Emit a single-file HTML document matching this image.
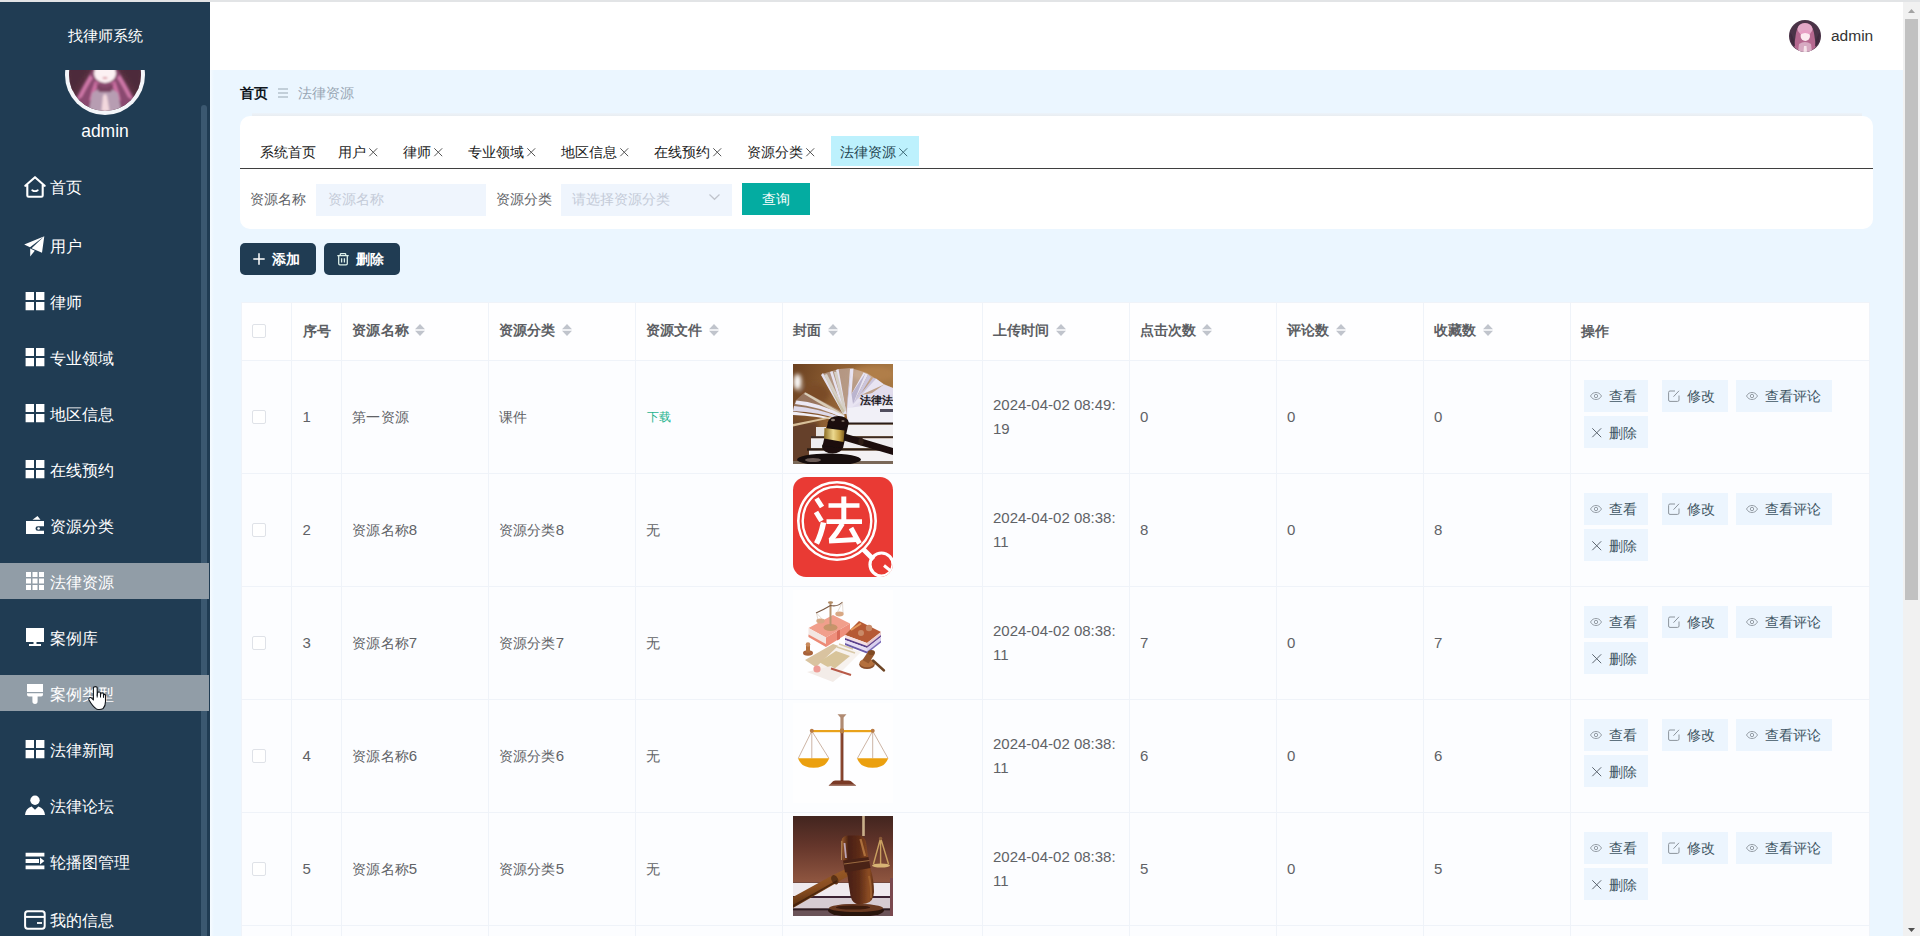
<!DOCTYPE html>
<html lang="zh">
<head>
<meta charset="utf-8">
<title>法律资源</title>
<style>
*{box-sizing:border-box;margin:0;padding:0}
html,body{width:1920px;height:936px;overflow:hidden}
body{position:relative;background:#ebf6ff;font-family:"Liberation Sans",sans-serif;font-size:14px;color:#606266}
.a{position:absolute}
.t{position:absolute;white-space:nowrap}
.j{text-align:justify;text-align-last:justify}
svg{position:absolute;overflow:visible}
/* sidebar */
#side{left:0;top:0;width:210px;height:936px;background:#203c53;overflow:hidden}
.mi{position:absolute;left:0;width:209px;height:36px}
.mi.on{background:#919da7}
.mi svg{left:24px;top:7px;width:22px;height:22px}
/* header */
#hdr{left:210px;top:0;width:1693px;height:70px;background:#fff}
/* tabs */
/* table */
.vl{position:absolute;top:302px;width:1px;height:634px;background:#eff3f9}
.hl{position:absolute;left:241px;width:1629px;height:1px;background:#eff3f9}
.cb{position:absolute;left:252px;width:14px;height:14px;border:1px solid #dfe2e8;border-radius:2px;background:#fff}
.ob{position:absolute;height:32px;background:#ecf5fe}
</style>
</head>
<body>
<!-- SIDEBAR -->
<div id="side" class="a">
<div class="t j" style="left:67.5px;top:24px;width:75.2px;height:24px;line-height:24px;font-size:15px;color:#fff;">找律师系统</div>
<div class="a" style="left:55px;top:70px;width:100px;height:50px;overflow:hidden"><svg style="left:10px;top:-35px;width:80px;height:80px" viewBox="0 0 80 80"><defs><clipPath id="avc"><circle cx="40" cy="40" r="36"/></clipPath><filter id="avb" x="-20%" y="-20%" width="140%" height="140%"><feGaussianBlur stdDeviation="1.100"/></filter></defs><circle cx="40" cy="40" r="40" fill="#f4f6fa"/><g clip-path="url(#avc)"><rect width="80" height="80" fill="#55303f"/><g filter="url(#avb)"><path d="M29 32Q17 50 9 66L20 78H60L71 66Q63 50 51 32Z" fill="#8a4a70"/><path d="M25 40Q16 56 12 65L17 62Q23 50 28 43Z M55 40Q64 56 68 65L63 62Q57 50 52 43Z" fill="#cf78a8"/><path d="M30 46Q26 56 24 66L28 64Q30 55 34 48Z M50 46Q54 56 56 66L52 64Q50 55 46 48Z" fill="#cc6fa2"/><path d="M4 34H23Q14 48 6 58Z M76 34H57Q66 48 74 58Z" fill="#4d2a3a"/><path d="M27 58Q40 48 53 58L57 80H23Z" fill="#b79db2"/><path d="M31 48Q40 56 49 48L46 57H34Z" fill="#7a4262"/><ellipse cx="40" cy="38" rx="11" ry="10" fill="#fcf1f3"/><ellipse cx="40" cy="43" rx="2.600" ry="1.100" fill="#d9929f"/><path d="M36.500 76L38 61Q40 57 42 61L44.500 76Z" fill="#f3d8dd"/></g></g></svg></div>
<div class="t" style="left:0;top:119px;width:210px;height:24px;line-height:24px;text-align:center;color:#fff;font-size:17.500px">admin</div>
<div class="a" style="left:201px;top:105px;width:6px;height:840px;background:#3b5870;border-radius:3px"></div>
<div class="mi" style="top:169px"><svg viewBox="0 0 22 22"><path d="M1.300 9.800L11 1.200L20.700 9.800M3.300 8.800V19.400Q3.300 20.700 4.600 20.700H17.400Q18.700 20.700 18.700 19.400V8.800" fill="none" stroke="#fff" stroke-width="2.100" stroke-linejoin="round" stroke-linecap="round"/><path d="M8.200 14.200Q11 16.200 13.800 14.200" fill="none" stroke="#fff" stroke-width="1.700" stroke-linecap="round"/></svg></div>
<div class="t j" style="left:50px;top:173px;width:32.2px;height:30px;line-height:30px;font-size:16px;color:#fff;">首页</div>
<div class="mi" style="top:227.5px"><svg viewBox="0 0 22 22"><path d="M20.300 1.200L0.200 9.600L6 12.300Z M20.300 1.200L18 17.800L7.600 13.200Z M6.200 13.600V21.400L10.800 15.800Z" fill="#fff"/></svg></div>
<div class="t j" style="left:50px;top:231.5px;width:32.2px;height:30px;line-height:30px;font-size:16px;color:#fff;">用户</div>
<div class="mi" style="top:283px"><svg viewBox="0 0 22 22"><path d="M1.600 2h8.400v8H1.600z M12 2h8.400v8H12z M1.600 12h8.400v8.300H1.600z M12 12h8.400v8.300H12z" fill="#fff"/></svg></div>
<div class="t j" style="left:50px;top:287.5px;width:32.2px;height:30px;line-height:30px;font-size:16px;color:#fff;">律师</div>
<div class="mi" style="top:339px"><svg viewBox="0 0 22 22"><path d="M1.600 2h8.400v8H1.600z M12 2h8.400v8H12z M1.600 12h8.400v8.300H1.600z M12 12h8.400v8.300H12z" fill="#fff"/></svg></div>
<div class="t j" style="left:50px;top:343.5px;width:64.2px;height:30px;line-height:30px;font-size:16px;color:#fff;">专业领域</div>
<div class="mi" style="top:395px"><svg viewBox="0 0 22 22"><path d="M1.600 2h8.400v8H1.600z M12 2h8.400v8H12z M1.600 12h8.400v8.300H1.600z M12 12h8.400v8.300H12z" fill="#fff"/></svg></div>
<div class="t j" style="left:50px;top:399.5px;width:64.2px;height:30px;line-height:30px;font-size:16px;color:#fff;">地区信息</div>
<div class="mi" style="top:451px"><svg viewBox="0 0 22 22"><path d="M1.600 2h8.400v8H1.600z M12 2h8.400v8H12z M1.600 12h8.400v8.300H1.600z M12 12h8.400v8.300H12z" fill="#fff"/></svg></div>
<div class="t j" style="left:50px;top:455.5px;width:64.2px;height:30px;line-height:30px;font-size:16px;color:#fff;">在线预约</div>
<div class="mi" style="top:507px"><svg viewBox="0 0 22 22"><path d="M2 7h18v5.200h-6.200a2.300 2.300 0 0 0 0 4.600H20V20H2z M8.500 5.800L13.500 2L16.500 5.800z" fill="#fff"/><circle cx="14.600" cy="14.500" r="1.300" fill="#fff"/></svg></div>
<div class="t j" style="left:50px;top:511.5px;width:64.2px;height:30px;line-height:30px;font-size:16px;color:#fff;">资源分类</div>
<div class="mi on" style="top:563px"><svg viewBox="0 0 22 22"><path d="M2 2h5v5H2z M8.500 2h5v5h-5z M15 2h5v5h-5z M2 8.500h5v5H2z M8.500 8.500h5v5h-5z M15 8.500h5v5h-5z M2 15h5v5H2z M8.500 15h5v5h-5z M15 15h5v5h-5z" fill="#fff"/></svg></div>
<div class="t j" style="left:50px;top:567.5px;width:64.2px;height:30px;line-height:30px;font-size:16px;color:#fff;">法律资源</div>
<div class="mi" style="top:619px"><svg viewBox="0 0 22 22"><path d="M2 2h18v14H2z M9.500 16h3v2h-3z M5 18h12v2H5z" fill="#fff"/></svg></div>
<div class="t j" style="left:50px;top:623.5px;width:48.2px;height:30px;line-height:30px;font-size:16px;color:#fff;">案例库</div>
<div class="mi on" style="top:675px"><svg viewBox="0 0 22 22"><path d="M3 2h16v8H3z M3 11.300h16v1.200q0 2-2 2h-3.400v4.800a2.600 2.600 0 0 1-5.200 0v-4.800H5q-2 0-2-2z" fill="#fff"/></svg></div>
<div class="t j" style="left:50px;top:679.5px;width:64.2px;height:30px;line-height:30px;font-size:16px;color:#fff;">案例类型</div>
<div class="mi" style="top:731px"><svg viewBox="0 0 22 22"><path d="M1.600 2h8.400v8H1.600z M12 2h8.400v8H12z M1.600 12h8.400v8.300H1.600z M12 12h8.400v8.300H12z" fill="#fff"/></svg></div>
<div class="t j" style="left:50px;top:735.5px;width:64.2px;height:30px;line-height:30px;font-size:16px;color:#fff;">法律新闻</div>
<div class="mi" style="top:787px"><svg viewBox="0 0 22 22"><circle cx="11" cy="6.200" r="4.700" fill="#fff"/><path d="M1 21q0.600-6.400 6.600-8.400L11 15.800L14.400 12.600q6 2 6.600 8.400z" fill="#fff"/></svg></div>
<div class="t j" style="left:50px;top:791.5px;width:64.2px;height:30px;line-height:30px;font-size:16px;color:#fff;">法律论坛</div>
<div class="mi" style="top:843px"><svg viewBox="0 0 22 22"><path d="M1.600 2.800h18.800v3.800H1.600z M1.600 9.100h13.400v3.800H1.600z M1.600 15.400h18.800v3.800H1.600z M16 7.500L20.400 11L16 14.500z" fill="#fff"/></svg></div>
<div class="t j" style="left:50px;top:847.5px;width:80.2px;height:30px;line-height:30px;font-size:16px;color:#fff;">轮播图管理</div>
<div class="mi" style="top:901.5px"><svg viewBox="0 0 22 22"><rect x="1.100" y="2.300" width="19.600" height="17.400" rx="2.600" fill="none" stroke="#fff" stroke-width="2"/><path d="M1 7.900h20" stroke="#fff" stroke-width="2"/><path d="M13 14h5" stroke="#fff" stroke-width="1.800"/></svg></div>
<div class="t j" style="left:50px;top:905.5px;width:64.2px;height:30px;line-height:30px;font-size:16px;color:#fff;">我的信息</div>
<svg style="left:88px;top:686px;width:18px;height:24px" viewBox="0 0 18 24"><path d="M5.400 14V2Q5.400 0.600 7.300 0.600T9.200 2V9.200Q9.300 5.800 10.900 5.800Q12.400 5.900 12.500 7.400V9.800Q12.500 6.800 14.100 6.800Q15.400 6.900 15.500 8.400V10.400Q15.600 8 16.700 8.100Q17.500 8.300 17.500 9.600V15.500Q17.500 19.800 15.200 22.400Q12 24.200 8.400 22.900Q4.600 20.400 1 14Q0.200 12.400 1.500 11.700T3.900 12.300Z" fill="#fff" stroke="#10151a" stroke-width="1.100" stroke-linejoin="round"/><path d="M9.200 8.500V11.500M12.500 9.500V11.500M15.500 10V11.800" stroke="#10151a" stroke-width="1" fill="none"/></svg>
</div>
<!-- HEADER -->
<div id="hdr" class="a"></div>
<svg style="left:1789px;top:20px;width:32px;height:32px" viewBox="0 0 32 32"><defs><clipPath id="hc"><circle cx="16" cy="16" r="16"/></clipPath><filter id="hb" x="-20%" y="-20%" width="140%" height="140%"><feGaussianBlur stdDeviation="0.700"/></filter></defs><g clip-path="url(#hc)"><rect width="32" height="32" fill="#4a3347"/><g filter="url(#hb)"><path d="M7 13Q9 3 16 3T25 13L27 27L22 31H10L5 27Z" fill="#b5688f"/><ellipse cx="16" cy="9" rx="7.500" ry="6" fill="#e3a7c6"/><ellipse cx="16.300" cy="16" rx="4.700" ry="5" fill="#fdeaf0"/><path d="M11 12Q16 8 21.500 12L21 14.500Q16 11.500 11.500 14.500Z" fill="#e79fc4"/><path d="M10 24Q16 20 22 24L23 32H9Z" fill="#d7a9c2"/><path d="M14.500 32L15 26H17.500L18 32Z" fill="#f6e3ea"/><path d="M1 12Q5 16 6 27L2 22Z M31 12Q27 16 26 27L30 22Z" fill="#3f2a3e"/></g></g></svg>
<div class="t" style="left:1831px;top:24px;height:24px;line-height:24px;font-size:15.5px;color:#333;">admin</div>
<div class="a" style="left:210px;top:70px;width:4px;height:866px;background:linear-gradient(90deg,#f6fbff,#ebf6ff)"></div>
<div class="a" style="left:0;top:0;width:1920px;height:2px;background:#e2e4e6"></div>
<div class="a" style="left:1903px;top:2px;width:17px;height:934px;background:#f1f1f1"></div>
<div class="a" style="left:1905px;top:19px;width:13px;height:581px;background:#c1c1c1"></div>
<svg style="left:1908px;top:9px;width:7px;height:4px" viewBox="0 0 7 4"><path d="M0 4L3.500 0L7 4Z" fill="#a3a3a3"/></svg>
<svg style="left:1908px;top:928px;width:7px;height:4px" viewBox="0 0 7 4"><path d="M0 0L3.500 4L7 0Z" fill="#505050"/></svg>
<div class="t j" style="left:240px;top:82px;width:28.2px;height:22px;line-height:22px;font-size:14px;color:#10161d;font-weight:bold;">首页</div>
<svg style="left:278px;top:88px;width:10px;height:10px" viewBox="0 0 10 10"><path d="M0 1h10M0 5h10M0 9h10" stroke="#9aa7b3" stroke-width="1.100"/></svg>
<div class="t j" style="left:298px;top:82px;width:56.2px;height:22px;line-height:22px;font-size:14px;color:#98a6b4;">法律资源</div>
<div class="a" style="left:252px;top:113px;width:1610px;height:3px;background:linear-gradient(#ecf3fa,#e9edf1)"></div>
<div class="a" style="left:240px;top:116px;width:1633px;height:113px;background:#fff;border-radius:10px"></div>
<div class="a" style="left:831px;top:136px;width:88px;height:30px;background:#bdf1fd"></div>
<div class="t j" style="left:259.5px;top:140px;width:56.2px;height:24px;line-height:24px;font-size:14px;color:#1a1a1a;">系统首页</div>
<div class="t j" style="left:338px;top:140px;width:28.2px;height:24px;line-height:24px;font-size:14px;color:#1a1a1a;">用户</div>
<svg style="left:368.7px;top:148px;width:8.500px;height:8.500px" viewBox="0 0 8.500 8.500"><path d="M0.300 0.300L8.200 8.200M8.200 0.300L0.300 8.200" stroke="#555" stroke-width="1"/></svg>
<div class="t j" style="left:403px;top:140px;width:28.2px;height:24px;line-height:24px;font-size:14px;color:#1a1a1a;">律师</div>
<svg style="left:433.7px;top:148px;width:8.500px;height:8.500px" viewBox="0 0 8.500 8.500"><path d="M0.300 0.300L8.200 8.200M8.200 0.300L0.300 8.200" stroke="#555" stroke-width="1"/></svg>
<div class="t j" style="left:468px;top:140px;width:56.2px;height:24px;line-height:24px;font-size:14px;color:#1a1a1a;">专业领域</div>
<svg style="left:526.7px;top:148px;width:8.500px;height:8.500px" viewBox="0 0 8.500 8.500"><path d="M0.300 0.300L8.200 8.200M8.200 0.300L0.300 8.200" stroke="#555" stroke-width="1"/></svg>
<div class="t j" style="left:561px;top:140px;width:56.2px;height:24px;line-height:24px;font-size:14px;color:#1a1a1a;">地区信息</div>
<svg style="left:619.5px;top:148px;width:8.500px;height:8.500px" viewBox="0 0 8.500 8.500"><path d="M0.300 0.300L8.200 8.200M8.200 0.300L0.300 8.200" stroke="#555" stroke-width="1"/></svg>
<div class="t j" style="left:654px;top:140px;width:56.2px;height:24px;line-height:24px;font-size:14px;color:#1a1a1a;">在线预约</div>
<svg style="left:712.5px;top:148px;width:8.500px;height:8.500px" viewBox="0 0 8.500 8.500"><path d="M0.300 0.300L8.200 8.200M8.200 0.300L0.300 8.200" stroke="#555" stroke-width="1"/></svg>
<div class="t j" style="left:747px;top:140px;width:56.2px;height:24px;line-height:24px;font-size:14px;color:#1a1a1a;">资源分类</div>
<svg style="left:805.7px;top:148px;width:8.500px;height:8.500px" viewBox="0 0 8.500 8.500"><path d="M0.300 0.300L8.200 8.200M8.200 0.300L0.300 8.200" stroke="#555" stroke-width="1"/></svg>
<div class="t j" style="left:840px;top:140px;width:56.2px;height:24px;line-height:24px;font-size:14px;color:#1d4450;">法律资源</div>
<svg style="left:899px;top:148px;width:8.500px;height:8.500px" viewBox="0 0 8.500 8.500"><path d="M0.300 0.300L8.200 8.200M8.200 0.300L0.300 8.200" stroke="#3d6b78" stroke-width="1"/></svg>
<div class="a" style="left:240px;top:167.600px;width:1633px;height:1.500px;background:#3f3f3f"></div>
<div class="t j" style="left:250px;top:187px;width:56.2px;height:24px;line-height:24px;font-size:14px;color:#606266;">资源名称</div>
<div class="a" style="left:316px;top:184px;width:170px;height:32px;background:#eff5fd"></div>
<div class="t j" style="left:328px;top:187px;width:56.2px;height:24px;line-height:24px;font-size:14px;color:#c4cbd8;">资源名称</div>
<div class="t j" style="left:496px;top:187px;width:56.2px;height:24px;line-height:24px;font-size:14px;color:#606266;">资源分类</div>
<div class="a" style="left:561px;top:184px;width:171px;height:32px;background:#eff5fd"></div>
<div class="t j" style="left:572px;top:187px;width:98.2px;height:24px;line-height:24px;font-size:14px;color:#c4cbd8;">请选择资源分类</div>
<svg style="left:709px;top:194px;width:11px;height:6px" viewBox="0 0 11 6"><path d="M0.500 0.500L5.500 5.300L10.500 0.500" fill="none" stroke="#c0c4cc" stroke-width="1.200"/></svg>
<div class="a" style="left:742px;top:183px;width:68px;height:32px;background:#04aca1"></div>
<div class="t j" style="left:762px;top:187px;width:28.2px;height:24px;line-height:24px;font-size:14px;color:#fff;">查询</div>
<div class="a" style="left:240px;top:243px;width:76px;height:32px;background:#203c53;border-radius:5px"></div>
<svg style="left:253px;top:253px;width:12px;height:12px" viewBox="0 0 12 12"><path d="M6 0.300V11.700M0.300 6H11.700" stroke="#fff" stroke-width="1.500"/></svg>
<div class="t j" style="left:272px;top:247px;width:28.2px;height:24px;line-height:24px;font-size:14px;color:#fff;font-weight:bold;">添加</div>
<div class="a" style="left:324px;top:243px;width:76px;height:32px;background:#203c53;border-radius:5px"></div>
<svg style="left:337px;top:253px;width:12px;height:12.500px" viewBox="0 0 12 12.500"><path d="M0.300 2.700H11.700M3.300 2.500V1.300Q3.300 0.700 4 0.700H8Q8.700 0.700 8.700 1.300V2.500M1.700 3V10.500Q1.700 11.800 2.900 11.800H9.100Q10.300 11.800 10.300 10.500V3M4.600 5.200V9.600M7.400 5.200V9.600" fill="none" stroke="#dcefe9" stroke-width="1.300"/></svg>
<div class="t j" style="left:355.5px;top:247px;width:28.2px;height:24px;line-height:24px;font-size:14px;color:#fff;font-weight:bold;">删除</div>
<!-- TABLE -->
<div class="a" style="left:241px;top:302px;width:1629px;height:58px;background:#fefeff"></div>
<div class="a" style="left:241px;top:360px;width:1629px;height:576px;background:#fcfdff"></div>
<div class="hl" style="top:302px"></div>
<div class="hl" style="top:360px"></div>
<div class="hl" style="top:473px"></div>
<div class="hl" style="top:586px"></div>
<div class="hl" style="top:699px"></div>
<div class="hl" style="top:812px"></div>
<div class="hl" style="top:925px"></div>
<div class="vl" style="left:241px"></div>
<div class="vl" style="left:291px"></div>
<div class="vl" style="left:341px"></div>
<div class="vl" style="left:488px"></div>
<div class="vl" style="left:635px"></div>
<div class="vl" style="left:782px"></div>
<div class="vl" style="left:982px"></div>
<div class="vl" style="left:1129px"></div>
<div class="vl" style="left:1276px"></div>
<div class="vl" style="left:1423px"></div>
<div class="vl" style="left:1570px"></div>
<div class="vl" style="left:1869px"></div>
<div class="t j" style="left:302.5px;top:315.5px;width:28.2px;height:30px;line-height:30px;font-size:14px;color:#5c5e63;font-weight:bold;">序号</div>
<div class="t j" style="left:352.4px;top:314.5px;width:56.2px;height:30px;line-height:30px;font-size:14px;color:#5c5e63;font-weight:bold;">资源名称</div>
<svg style="left:414.7px;top:324px;width:10px;height:12px" viewBox="0 0 10 12"><path d="M0 5.200L5 0L10 5.200Z M0 6.800L5 12L10 6.800Z" fill="#c0c4cc"/></svg>
<div class="t j" style="left:499.3px;top:314.5px;width:56.2px;height:30px;line-height:30px;font-size:14px;color:#5c5e63;font-weight:bold;">资源分类</div>
<svg style="left:561.6px;top:324px;width:10px;height:12px" viewBox="0 0 10 12"><path d="M0 5.200L5 0L10 5.200Z M0 6.800L5 12L10 6.800Z" fill="#c0c4cc"/></svg>
<div class="t j" style="left:646.3px;top:314.5px;width:56.2px;height:30px;line-height:30px;font-size:14px;color:#5c5e63;font-weight:bold;">资源文件</div>
<svg style="left:708.6px;top:324px;width:10px;height:12px" viewBox="0 0 10 12"><path d="M0 5.200L5 0L10 5.200Z M0 6.800L5 12L10 6.800Z" fill="#c0c4cc"/></svg>
<div class="t j" style="left:792.7px;top:314.5px;width:28.2px;height:30px;line-height:30px;font-size:14px;color:#5c5e63;font-weight:bold;">封面</div>
<svg style="left:828.3px;top:324px;width:10px;height:12px" viewBox="0 0 10 12"><path d="M0 5.200L5 0L10 5.200Z M0 6.800L5 12L10 6.800Z" fill="#c0c4cc"/></svg>
<div class="t j" style="left:993.3px;top:314.5px;width:56.2px;height:30px;line-height:30px;font-size:14px;color:#5c5e63;font-weight:bold;">上传时间</div>
<svg style="left:1055.6px;top:324px;width:10px;height:12px" viewBox="0 0 10 12"><path d="M0 5.200L5 0L10 5.200Z M0 6.800L5 12L10 6.800Z" fill="#c0c4cc"/></svg>
<div class="t j" style="left:1140px;top:314.5px;width:56.2px;height:30px;line-height:30px;font-size:14px;color:#5c5e63;font-weight:bold;">点击次数</div>
<svg style="left:1202.3px;top:324px;width:10px;height:12px" viewBox="0 0 10 12"><path d="M0 5.200L5 0L10 5.200Z M0 6.800L5 12L10 6.800Z" fill="#c0c4cc"/></svg>
<div class="t j" style="left:1287.3px;top:314.5px;width:42.2px;height:30px;line-height:30px;font-size:14px;color:#5c5e63;font-weight:bold;">评论数</div>
<svg style="left:1336px;top:324px;width:10px;height:12px" viewBox="0 0 10 12"><path d="M0 5.200L5 0L10 5.200Z M0 6.800L5 12L10 6.800Z" fill="#c0c4cc"/></svg>
<div class="t j" style="left:1434px;top:314.5px;width:42.2px;height:30px;line-height:30px;font-size:14px;color:#5c5e63;font-weight:bold;">收藏数</div>
<svg style="left:1482.7px;top:324px;width:10px;height:12px" viewBox="0 0 10 12"><path d="M0 5.200L5 0L10 5.200Z M0 6.800L5 12L10 6.800Z" fill="#c0c4cc"/></svg>
<div class="t j" style="left:1581px;top:315.5px;width:28.2px;height:30px;line-height:30px;font-size:14px;color:#5c5e63;font-weight:bold;">操作</div>
<div class="cb" style="top:324px"></div>
<div class="cb" style="top:410px"></div>
<div class="t" style="left:302.5px;top:404.5px;height:24px;line-height:24px;font-size:15px;color:#606266;">1</div>
<div class="t j" style="left:352.4px;top:404.5px;width:56.2px;height:24px;line-height:24px;font-size:14px;color:#606266;">第一资源</div>
<div class="t j" style="left:499.3px;top:404.5px;width:28.2px;height:24px;line-height:24px;font-size:14px;color:#606266;">课件</div>
<div class="t j" style="left:647px;top:404.5px;width:24.2px;height:24px;line-height:24px;font-size:12px;color:#1fb38e;">下载</div>
<div class="t" style="left:993px;top:392.5px;height:24px;line-height:24px;font-size:15px;color:#606266;">2024-04-02 08:49:</div>
<div class="t" style="left:993px;top:416.5px;height:24px;line-height:24px;font-size:15px;color:#606266;">19</div>
<div class="t" style="left:1140px;top:404.5px;height:24px;line-height:24px;font-size:15px;color:#606266;">0</div>
<div class="t" style="left:1287px;top:404.5px;height:24px;line-height:24px;font-size:15px;color:#606266;">0</div>
<div class="t" style="left:1434px;top:404.5px;height:24px;line-height:24px;font-size:15px;color:#606266;">0</div>
<div class="ob" style="left:1584px;top:380px;width:64px"></div><svg style="left:1590px;top:392px;width:12px;height:8px" viewBox="0 0 12 8"><path d="M0.500 4C2 1.300 4 0.500 6 0.500S10 1.300 11.500 4C10 6.700 8 7.500 6 7.500S2 6.700 0.500 4Z" fill="none" stroke="#8c949c" stroke-width="0.900"/><circle cx="6" cy="4" r="1.700" fill="none" stroke="#8c949c" stroke-width="0.900"/></svg><div class="t j" style="left:1609.3px;top:384px;width:28.2px;height:24px;line-height:24px;font-size:14px;color:#3f5564;">查看</div>
<div class="ob" style="left:1662px;top:380px;width:66px"></div><svg style="left:1667.500px;top:389.5px;width:12px;height:12px" viewBox="0 0 12 12"><path d="M7 1H2Q0.600 1 0.600 2.400V10Q0.600 11.400 2 11.400H9.600Q11 11.400 11 10V5.500" fill="none" stroke="#8c949c" stroke-width="1"/><path d="M5.500 6.700L11 0.800" stroke="#8c949c" stroke-width="1"/></svg><div class="t j" style="left:1686.5px;top:384px;width:28.2px;height:24px;line-height:24px;font-size:14px;color:#3f5564;">修改</div>
<div class="ob" style="left:1736px;top:380px;width:96px"></div><svg style="left:1746px;top:392px;width:12px;height:8px" viewBox="0 0 12 8"><path d="M0.500 4C2 1.300 4 0.500 6 0.500S10 1.300 11.500 4C10 6.700 8 7.500 6 7.500S2 6.700 0.500 4Z" fill="none" stroke="#8c949c" stroke-width="0.900"/><circle cx="6" cy="4" r="1.700" fill="none" stroke="#8c949c" stroke-width="0.900"/></svg><div class="t j" style="left:1764.8px;top:384px;width:56.2px;height:24px;line-height:24px;font-size:14px;color:#3f5564;">查看评论</div>
<div class="ob" style="left:1584px;top:416px;width:64px"></div><svg style="left:1591.500px;top:428px;width:9.500px;height:9.500px" viewBox="0 0 9.500 9.500"><path d="M0.300 0.300L9.200 9.200M9.200 0.300L0.300 9.200" stroke="#5d6670" stroke-width="1"/></svg><div class="t j" style="left:1609.3px;top:421px;width:28.2px;height:24px;line-height:24px;font-size:14px;color:#3f5564;">删除</div>
<div class="cb" style="top:523px"></div>
<div class="t" style="left:302.5px;top:517.5px;height:24px;line-height:24px;font-size:15px;color:#606266;">2</div>
<div class="t j" style="left:352.4px;top:517.5px;width:56.2px;height:24px;line-height:24px;font-size:14px;color:#606266;">资源名称</div>
<div class="t" style="left:408.8px;top:517.5px;height:24px;line-height:24px;font-size:15px;color:#606266;">8</div>
<div class="t j" style="left:499.3px;top:517.5px;width:56.2px;height:24px;line-height:24px;font-size:14px;color:#606266;">资源分类</div>
<div class="t" style="left:555.7px;top:517.5px;height:24px;line-height:24px;font-size:15px;color:#606266;">8</div>
<div class="t j" style="left:646.3px;top:517.5px;width:14.2px;height:24px;line-height:24px;font-size:14px;color:#606266;">无</div>
<div class="t" style="left:993px;top:505.5px;height:24px;line-height:24px;font-size:15px;color:#606266;">2024-04-02 08:38:</div>
<div class="t" style="left:993px;top:529.5px;height:24px;line-height:24px;font-size:15px;color:#606266;">11</div>
<div class="t" style="left:1140px;top:517.5px;height:24px;line-height:24px;font-size:15px;color:#606266;">8</div>
<div class="t" style="left:1287px;top:517.5px;height:24px;line-height:24px;font-size:15px;color:#606266;">0</div>
<div class="t" style="left:1434px;top:517.5px;height:24px;line-height:24px;font-size:15px;color:#606266;">8</div>
<div class="ob" style="left:1584px;top:493px;width:64px"></div><svg style="left:1590px;top:505px;width:12px;height:8px" viewBox="0 0 12 8"><path d="M0.500 4C2 1.300 4 0.500 6 0.500S10 1.300 11.500 4C10 6.700 8 7.500 6 7.500S2 6.700 0.500 4Z" fill="none" stroke="#8c949c" stroke-width="0.900"/><circle cx="6" cy="4" r="1.700" fill="none" stroke="#8c949c" stroke-width="0.900"/></svg><div class="t j" style="left:1609.3px;top:497px;width:28.2px;height:24px;line-height:24px;font-size:14px;color:#3f5564;">查看</div>
<div class="ob" style="left:1662px;top:493px;width:66px"></div><svg style="left:1667.500px;top:502.5px;width:12px;height:12px" viewBox="0 0 12 12"><path d="M7 1H2Q0.600 1 0.600 2.400V10Q0.600 11.400 2 11.400H9.600Q11 11.400 11 10V5.500" fill="none" stroke="#8c949c" stroke-width="1"/><path d="M5.500 6.700L11 0.800" stroke="#8c949c" stroke-width="1"/></svg><div class="t j" style="left:1686.5px;top:497px;width:28.2px;height:24px;line-height:24px;font-size:14px;color:#3f5564;">修改</div>
<div class="ob" style="left:1736px;top:493px;width:96px"></div><svg style="left:1746px;top:505px;width:12px;height:8px" viewBox="0 0 12 8"><path d="M0.500 4C2 1.300 4 0.500 6 0.500S10 1.300 11.500 4C10 6.700 8 7.500 6 7.500S2 6.700 0.500 4Z" fill="none" stroke="#8c949c" stroke-width="0.900"/><circle cx="6" cy="4" r="1.700" fill="none" stroke="#8c949c" stroke-width="0.900"/></svg><div class="t j" style="left:1764.8px;top:497px;width:56.2px;height:24px;line-height:24px;font-size:14px;color:#3f5564;">查看评论</div>
<div class="ob" style="left:1584px;top:529px;width:64px"></div><svg style="left:1591.500px;top:541px;width:9.500px;height:9.500px" viewBox="0 0 9.500 9.500"><path d="M0.300 0.300L9.200 9.200M9.200 0.300L0.300 9.200" stroke="#5d6670" stroke-width="1"/></svg><div class="t j" style="left:1609.3px;top:534px;width:28.2px;height:24px;line-height:24px;font-size:14px;color:#3f5564;">删除</div>
<div class="cb" style="top:636px"></div>
<div class="t" style="left:302.5px;top:630.5px;height:24px;line-height:24px;font-size:15px;color:#606266;">3</div>
<div class="t j" style="left:352.4px;top:630.5px;width:56.2px;height:24px;line-height:24px;font-size:14px;color:#606266;">资源名称</div>
<div class="t" style="left:408.8px;top:630.5px;height:24px;line-height:24px;font-size:15px;color:#606266;">7</div>
<div class="t j" style="left:499.3px;top:630.5px;width:56.2px;height:24px;line-height:24px;font-size:14px;color:#606266;">资源分类</div>
<div class="t" style="left:555.7px;top:630.5px;height:24px;line-height:24px;font-size:15px;color:#606266;">7</div>
<div class="t j" style="left:646.3px;top:630.5px;width:14.2px;height:24px;line-height:24px;font-size:14px;color:#606266;">无</div>
<div class="t" style="left:993px;top:618.5px;height:24px;line-height:24px;font-size:15px;color:#606266;">2024-04-02 08:38:</div>
<div class="t" style="left:993px;top:642.5px;height:24px;line-height:24px;font-size:15px;color:#606266;">11</div>
<div class="t" style="left:1140px;top:630.5px;height:24px;line-height:24px;font-size:15px;color:#606266;">7</div>
<div class="t" style="left:1287px;top:630.5px;height:24px;line-height:24px;font-size:15px;color:#606266;">0</div>
<div class="t" style="left:1434px;top:630.5px;height:24px;line-height:24px;font-size:15px;color:#606266;">7</div>
<div class="ob" style="left:1584px;top:606px;width:64px"></div><svg style="left:1590px;top:618px;width:12px;height:8px" viewBox="0 0 12 8"><path d="M0.500 4C2 1.300 4 0.500 6 0.500S10 1.300 11.500 4C10 6.700 8 7.500 6 7.500S2 6.700 0.500 4Z" fill="none" stroke="#8c949c" stroke-width="0.900"/><circle cx="6" cy="4" r="1.700" fill="none" stroke="#8c949c" stroke-width="0.900"/></svg><div class="t j" style="left:1609.3px;top:610px;width:28.2px;height:24px;line-height:24px;font-size:14px;color:#3f5564;">查看</div>
<div class="ob" style="left:1662px;top:606px;width:66px"></div><svg style="left:1667.500px;top:615.5px;width:12px;height:12px" viewBox="0 0 12 12"><path d="M7 1H2Q0.600 1 0.600 2.400V10Q0.600 11.400 2 11.400H9.600Q11 11.400 11 10V5.500" fill="none" stroke="#8c949c" stroke-width="1"/><path d="M5.500 6.700L11 0.800" stroke="#8c949c" stroke-width="1"/></svg><div class="t j" style="left:1686.5px;top:610px;width:28.2px;height:24px;line-height:24px;font-size:14px;color:#3f5564;">修改</div>
<div class="ob" style="left:1736px;top:606px;width:96px"></div><svg style="left:1746px;top:618px;width:12px;height:8px" viewBox="0 0 12 8"><path d="M0.500 4C2 1.300 4 0.500 6 0.500S10 1.300 11.500 4C10 6.700 8 7.500 6 7.500S2 6.700 0.500 4Z" fill="none" stroke="#8c949c" stroke-width="0.900"/><circle cx="6" cy="4" r="1.700" fill="none" stroke="#8c949c" stroke-width="0.900"/></svg><div class="t j" style="left:1764.8px;top:610px;width:56.2px;height:24px;line-height:24px;font-size:14px;color:#3f5564;">查看评论</div>
<div class="ob" style="left:1584px;top:642px;width:64px"></div><svg style="left:1591.500px;top:654px;width:9.500px;height:9.500px" viewBox="0 0 9.500 9.500"><path d="M0.300 0.300L9.200 9.200M9.200 0.300L0.300 9.200" stroke="#5d6670" stroke-width="1"/></svg><div class="t j" style="left:1609.3px;top:647px;width:28.2px;height:24px;line-height:24px;font-size:14px;color:#3f5564;">删除</div>
<div class="cb" style="top:749px"></div>
<div class="t" style="left:302.5px;top:743.5px;height:24px;line-height:24px;font-size:15px;color:#606266;">4</div>
<div class="t j" style="left:352.4px;top:743.5px;width:56.2px;height:24px;line-height:24px;font-size:14px;color:#606266;">资源名称</div>
<div class="t" style="left:408.8px;top:743.5px;height:24px;line-height:24px;font-size:15px;color:#606266;">6</div>
<div class="t j" style="left:499.3px;top:743.5px;width:56.2px;height:24px;line-height:24px;font-size:14px;color:#606266;">资源分类</div>
<div class="t" style="left:555.7px;top:743.5px;height:24px;line-height:24px;font-size:15px;color:#606266;">6</div>
<div class="t j" style="left:646.3px;top:743.5px;width:14.2px;height:24px;line-height:24px;font-size:14px;color:#606266;">无</div>
<div class="t" style="left:993px;top:731.5px;height:24px;line-height:24px;font-size:15px;color:#606266;">2024-04-02 08:38:</div>
<div class="t" style="left:993px;top:755.5px;height:24px;line-height:24px;font-size:15px;color:#606266;">11</div>
<div class="t" style="left:1140px;top:743.5px;height:24px;line-height:24px;font-size:15px;color:#606266;">6</div>
<div class="t" style="left:1287px;top:743.5px;height:24px;line-height:24px;font-size:15px;color:#606266;">0</div>
<div class="t" style="left:1434px;top:743.5px;height:24px;line-height:24px;font-size:15px;color:#606266;">6</div>
<div class="ob" style="left:1584px;top:719px;width:64px"></div><svg style="left:1590px;top:731px;width:12px;height:8px" viewBox="0 0 12 8"><path d="M0.500 4C2 1.300 4 0.500 6 0.500S10 1.300 11.500 4C10 6.700 8 7.500 6 7.500S2 6.700 0.500 4Z" fill="none" stroke="#8c949c" stroke-width="0.900"/><circle cx="6" cy="4" r="1.700" fill="none" stroke="#8c949c" stroke-width="0.900"/></svg><div class="t j" style="left:1609.3px;top:723px;width:28.2px;height:24px;line-height:24px;font-size:14px;color:#3f5564;">查看</div>
<div class="ob" style="left:1662px;top:719px;width:66px"></div><svg style="left:1667.500px;top:728.5px;width:12px;height:12px" viewBox="0 0 12 12"><path d="M7 1H2Q0.600 1 0.600 2.400V10Q0.600 11.400 2 11.400H9.600Q11 11.400 11 10V5.500" fill="none" stroke="#8c949c" stroke-width="1"/><path d="M5.500 6.700L11 0.800" stroke="#8c949c" stroke-width="1"/></svg><div class="t j" style="left:1686.5px;top:723px;width:28.2px;height:24px;line-height:24px;font-size:14px;color:#3f5564;">修改</div>
<div class="ob" style="left:1736px;top:719px;width:96px"></div><svg style="left:1746px;top:731px;width:12px;height:8px" viewBox="0 0 12 8"><path d="M0.500 4C2 1.300 4 0.500 6 0.500S10 1.300 11.500 4C10 6.700 8 7.500 6 7.500S2 6.700 0.500 4Z" fill="none" stroke="#8c949c" stroke-width="0.900"/><circle cx="6" cy="4" r="1.700" fill="none" stroke="#8c949c" stroke-width="0.900"/></svg><div class="t j" style="left:1764.8px;top:723px;width:56.2px;height:24px;line-height:24px;font-size:14px;color:#3f5564;">查看评论</div>
<div class="ob" style="left:1584px;top:755px;width:64px"></div><svg style="left:1591.500px;top:767px;width:9.500px;height:9.500px" viewBox="0 0 9.500 9.500"><path d="M0.300 0.300L9.200 9.200M9.200 0.300L0.300 9.200" stroke="#5d6670" stroke-width="1"/></svg><div class="t j" style="left:1609.3px;top:760px;width:28.2px;height:24px;line-height:24px;font-size:14px;color:#3f5564;">删除</div>
<div class="cb" style="top:862px"></div>
<div class="t" style="left:302.5px;top:856.5px;height:24px;line-height:24px;font-size:15px;color:#606266;">5</div>
<div class="t j" style="left:352.4px;top:856.5px;width:56.2px;height:24px;line-height:24px;font-size:14px;color:#606266;">资源名称</div>
<div class="t" style="left:408.8px;top:856.5px;height:24px;line-height:24px;font-size:15px;color:#606266;">5</div>
<div class="t j" style="left:499.3px;top:856.5px;width:56.2px;height:24px;line-height:24px;font-size:14px;color:#606266;">资源分类</div>
<div class="t" style="left:555.7px;top:856.5px;height:24px;line-height:24px;font-size:15px;color:#606266;">5</div>
<div class="t j" style="left:646.3px;top:856.5px;width:14.2px;height:24px;line-height:24px;font-size:14px;color:#606266;">无</div>
<div class="t" style="left:993px;top:844.5px;height:24px;line-height:24px;font-size:15px;color:#606266;">2024-04-02 08:38:</div>
<div class="t" style="left:993px;top:868.5px;height:24px;line-height:24px;font-size:15px;color:#606266;">11</div>
<div class="t" style="left:1140px;top:856.5px;height:24px;line-height:24px;font-size:15px;color:#606266;">5</div>
<div class="t" style="left:1287px;top:856.5px;height:24px;line-height:24px;font-size:15px;color:#606266;">0</div>
<div class="t" style="left:1434px;top:856.5px;height:24px;line-height:24px;font-size:15px;color:#606266;">5</div>
<div class="ob" style="left:1584px;top:832px;width:64px"></div><svg style="left:1590px;top:844px;width:12px;height:8px" viewBox="0 0 12 8"><path d="M0.500 4C2 1.300 4 0.500 6 0.500S10 1.300 11.500 4C10 6.700 8 7.500 6 7.500S2 6.700 0.500 4Z" fill="none" stroke="#8c949c" stroke-width="0.900"/><circle cx="6" cy="4" r="1.700" fill="none" stroke="#8c949c" stroke-width="0.900"/></svg><div class="t j" style="left:1609.3px;top:836px;width:28.2px;height:24px;line-height:24px;font-size:14px;color:#3f5564;">查看</div>
<div class="ob" style="left:1662px;top:832px;width:66px"></div><svg style="left:1667.500px;top:841.5px;width:12px;height:12px" viewBox="0 0 12 12"><path d="M7 1H2Q0.600 1 0.600 2.400V10Q0.600 11.400 2 11.400H9.600Q11 11.400 11 10V5.500" fill="none" stroke="#8c949c" stroke-width="1"/><path d="M5.500 6.700L11 0.800" stroke="#8c949c" stroke-width="1"/></svg><div class="t j" style="left:1686.5px;top:836px;width:28.2px;height:24px;line-height:24px;font-size:14px;color:#3f5564;">修改</div>
<div class="ob" style="left:1736px;top:832px;width:96px"></div><svg style="left:1746px;top:844px;width:12px;height:8px" viewBox="0 0 12 8"><path d="M0.500 4C2 1.300 4 0.500 6 0.500S10 1.300 11.500 4C10 6.700 8 7.500 6 7.500S2 6.700 0.500 4Z" fill="none" stroke="#8c949c" stroke-width="0.900"/><circle cx="6" cy="4" r="1.700" fill="none" stroke="#8c949c" stroke-width="0.900"/></svg><div class="t j" style="left:1764.8px;top:836px;width:56.2px;height:24px;line-height:24px;font-size:14px;color:#3f5564;">查看评论</div>
<div class="ob" style="left:1584px;top:868px;width:64px"></div><svg style="left:1591.500px;top:880px;width:9.500px;height:9.500px" viewBox="0 0 9.500 9.500"><path d="M0.300 0.300L9.200 9.200M9.200 0.300L0.300 9.200" stroke="#5d6670" stroke-width="1"/></svg><div class="t j" style="left:1609.3px;top:873px;width:28.2px;height:24px;line-height:24px;font-size:14px;color:#3f5564;">删除</div>
<!-- IMG2: red law logo -->
<svg style="left:793px;top:477px;width:100px;height:100px" viewBox="0 0 100 100">
<defs><clipPath id="c2"><rect width="100" height="100" rx="13" ry="13"/></clipPath></defs>
<g clip-path="url(#c2)">
<rect width="100" height="100" fill="#e93a34"/>
<circle cx="44" cy="44" r="38.700" fill="none" stroke="#fff" stroke-width="2.600"/>
<circle cx="44" cy="44" r="34.300" fill="none" stroke="#fff" stroke-width="2.400"/>
<path d="M70.500 72.500L80.500 82.500" stroke="#fff" stroke-width="5"/>
<circle cx="88.500" cy="87.500" r="11.500" fill="none" stroke="#fff" stroke-width="3.200"/>
<path d="M91 88.500L99 95" stroke="#fff" stroke-width="3"/>
<!-- 法 glyph -->
<g fill="none" stroke="#fff" stroke-linecap="butt">
<path d="M23.500 21.500L29 30" stroke-width="5"/>
<path d="M23 35L28.500 44" stroke-width="5"/>
<path d="M30.500 45.500Q28 58 23.500 66.500" stroke-width="5.500"/>
<path d="M35.500 28.500H66.500" stroke-width="4.600"/>
<path d="M50.800 19.500V44" stroke-width="5"/>
<path d="M33.500 44.600H69" stroke-width="4.600"/>
<path d="M49.500 46.500Q44 56 37.500 63.500" stroke-width="5"/>
<path d="M36 64.200L64 62.500" stroke-width="4.800"/>
<path d="M58 51L66.500 66.500" stroke-width="5"/>
</g>
</g>
</svg>
<!-- IMG4: golden scales -->
<svg style="left:793px;top:703px;width:100px;height:100px" viewBox="0 0 100 100">
<rect width="100" height="100" fill="#fefeff"/>
<path d="M44.500 11.300H53.500L50.600 14.500V28H47.400V14.500Z" fill="#b08a72"/>
<rect x="47.600" y="28" width="2.800" height="50" fill="#6b2d1c"/>
<rect x="48.300" y="30" width="1.200" height="47" fill="#9a5538"/>
<path d="M5.300 55.300L18.800 28L35.900 55.300M18.800 28V55.300" fill="none" stroke="#9a6a4a" stroke-width="0.500"/>
<path d="M64.400 55.300L79.700 28L95 55.300M79.700 28V55.300" fill="none" stroke="#9a6a4a" stroke-width="0.500"/>
<rect x="18.800" y="27" width="61" height="2.200" fill="#e9a21b"/>
<circle cx="18.800" cy="27.800" r="2" fill="#b97b45"/><circle cx="79.700" cy="27.800" r="2" fill="#b97b45"/>
<rect x="47" y="25.600" width="4" height="4.600" rx="1" fill="#b98046"/>
<path d="M5 55.300H36.200Q33 64.800 20.600 64.800T5 55.300Z" fill="#eba00f"/>
<path d="M64 55.300H95.200Q92 64.800 79.600 64.800T64 55.300Z" fill="#eba00f"/>
<path d="M35.600 82.800L40 78.300Q41 77.400 42.500 77.400H55.500Q57 77.400 58 78.300L63.200 82.800Z" fill="#7a3a26"/>
<path d="M35.600 82.800H63.200L62 81.600H36.800Z" fill="#a67c6c"/>
</svg>
<!-- IMG1: gavel and open book -->
<svg style="left:793px;top:364px;width:100px;height:100px;overflow:hidden" viewBox="0 0 100 100">
<defs>
<linearGradient id="i1bg" x1="0" y1="0" x2="1" y2="0.300"><stop offset="0" stop-color="#6a4020"/><stop offset="0.450" stop-color="#8e5f33"/><stop offset="1" stop-color="#a97a44"/></linearGradient>
<linearGradient id="i1gold" x1="0" y1="0" x2="1" y2="0"><stop offset="0" stop-color="#8a6a22"/><stop offset="0.450" stop-color="#ecd98f"/><stop offset="0.750" stop-color="#c9a64c"/><stop offset="1" stop-color="#7a5a1c"/></linearGradient>
<filter id="b1" x="-20%" y="-20%" width="140%" height="140%"><feGaussianBlur stdDeviation="0.700"/></filter>
<filter id="b2" x="-50%" y="-50%" width="200%" height="200%"><feGaussianBlur stdDeviation="2.200"/></filter>
<clipPath id="c1"><rect width="100" height="100"/></clipPath>
</defs>
<g clip-path="url(#c1)">
<rect width="100" height="100" fill="url(#i1bg)"/>
<g filter="url(#b2)">
<ellipse cx="22" cy="30" rx="14" ry="10" fill="#7a4c28"/>
<ellipse cx="80" cy="10" rx="22" ry="8" fill="#b07e48"/>
<ellipse cx="4.500" cy="18" rx="4" ry="8" fill="#fff"/>
<rect x="-5" y="58" width="30" height="50" fill="#65402a"/>
</g>
<g filter="url(#b1)">
<!-- right page mass -->
<path d="M53.500 50L57 5L60.500 4.500L58.500 30L70.500 8.500L75 10.500L63 34L83 14.500L91 20.500L68 31L100 26V60H55Z" fill="#e9e6f3"/><path d="M60 40L75 10.500L78 13L64 36Z M64 36L83 14.500L80 14L62 38Z" fill="#b7b0cf"/><path d="M58 44L91 20.500L100 24V44Z" fill="#dcd8ea"/>
<path d="M53.500 50L45.500 5L43 6L51 44L39.500 7L37 8L49 45L30 9L28 11L50 50Z" fill="#e4e0ee"/>
<path d="M53.500 50L58 5L55 30Z M58.500 30L72.500 9L60 40Z" fill="#9a93b5"/>
<path d="M50 50L31 11L34 10L52 46Z M51 48L41 8L44 8L53 46Z" fill="#c9c1a8"/>
<path d="M53.500 50L29 10L46 5L58 4L74 9L91 20L100 24V30Z" fill="#e6e2f0" opacity="0.420"/><path d="M53.500 50L12 28L2 37L0 47Z" fill="#d9d2dc" opacity="0.300"/>
<!-- left pages -->
<path d="M52 51Q30 38 12.500 28.500L11 30Q30 42 50 52Z" fill="#d9cdb8"/>
<path d="M52 52Q25 38 3.500 36.500L2 40Q24 42 50 54Z" fill="#ece9f4"/>
<path d="M50 54Q24 44 1 42L0 47Q26 48 48 56Z" fill="#dedaea"/>
<path d="M48 56Q24 50 0 47.500V51Q24 52 46 57Z" fill="#f1eff6"/>
<path d="M0 60Q20 56 38 52.500L38.500 54Q20 58 0 62.500Z" fill="#d8c09a"/>
<path d="M55 44L100 38V59H56Z" fill="#f1f0f7"/>
<!-- books stack -->
<rect x="54" y="58.500" width="46" height="2.200" fill="#2a1c16"/>
<rect x="52" y="60.700" width="48" height="11.600" fill="#f2f0f2"/>
<rect x="23" y="63" width="10" height="9.500" fill="#e6e2e0"/>
<rect x="18" y="72.300" width="82" height="2" fill="#3a2a22"/>
<rect x="18" y="74.300" width="82" height="10" fill="#efedf0"/>
<rect x="14" y="84.300" width="86" height="2.400" fill="#2a1c16"/>
<rect x="16" y="86.700" width="84" height="10.300" fill="#f3f1f3"/>
<rect x="0" y="97" width="100" height="3" fill="#7a6858"/>
<!-- gavel -->
<path d="M50 69L100 84V91L49 76Z" fill="#1b0f0c"/>
<ellipse cx="68" cy="77.500" rx="2.600" ry="3.800" fill="#2e1c16"/>
<ellipse cx="36" cy="95.500" rx="32" ry="6" fill="#140b09"/>
<ellipse cx="39.500" cy="83" rx="10.500" ry="6.500" fill="#1a0e0b"/>
<path d="M35 58L55.500 60L50 84L29.500 82Z" fill="#1a0e0b"/><path d="M31.500 64L51.500 66.500L50.500 78L31 74.500Z" fill="url(#i1gold)"/>
<ellipse cx="45.300" cy="58.500" rx="10.500" ry="6.500" fill="#1a0e0b"/>
<ellipse cx="40" cy="56" rx="2" ry="1.200" fill="#8a7a70"/><ellipse cx="50" cy="57" rx="1.600" ry="1" fill="#7a6a62"/>
<ellipse cx="20" cy="96" rx="8" ry="2" fill="#6a5a55"/>
</g>
<text x="67" y="39.500" font-family="'Liberation Sans',sans-serif" font-weight="bold" font-size="11" fill="#1c1a22" textLength="44" lengthAdjust="spacingAndGlyphs">法律法规</text>
<rect x="87" y="45" width="13" height="3" fill="#2a2838" opacity="0.800" filter="url(#b1)"/>
</g>
</svg>
<!-- IMG3: isometric law items -->
<svg style="left:793px;top:590px;width:100px;height:100px;overflow:hidden" viewBox="0 0 100 100">
<defs><filter id="b3" x="-20%" y="-20%" width="140%" height="140%"><feGaussianBlur stdDeviation="0.450"/></filter></defs>
<rect width="100" height="100" fill="#fefeff"/>
<g filter="url(#b3)">
<!-- papers -->
<path d="M12 70L40 54L66 63L36 86Z" fill="#d9c3a0"/>
<path d="M22 78L46 55L68 62L40 90Z" fill="#f7f2ee"/>
<path d="M26 72L43 61L57 66L40 80Z" fill="#d8c49a"/>
<path d="M14 82L38 76L50 84L40 92Z" fill="#f3ece8"/>
<path d="M46 54L60 59M44 57L62 63" stroke="#d9c9a8" stroke-width="1.400" fill="none"/>
<circle cx="24" cy="79" r="3.600" fill="#ee9c96"/>
<path d="M38 78.500L58 85" stroke="#b85a48" stroke-width="2"/>
<!-- pink book -->
<path d="M15.500 38L40 25L57 33.500L33 47.500Z" fill="#f19f8c"/>
<path d="M15.500 38L33 47.500V57L15.500 47Z" fill="#f3e6e2"/>
<path d="M15.500 44.500L33 54V57L15.500 47Z" fill="#ec8a76"/>
<path d="M33 47.500L57 33.500V42L33 57Z" fill="#ee8f7c"/>
<path d="M44 41L47 39.500V49L44 50.500Z" fill="#d96a58"/>
<!-- scales on book -->
<ellipse cx="37.500" cy="37.500" rx="7" ry="3.600" fill="#c7946a"/>
<path d="M36.500 13H38.500V36H36.500Z" fill="#b89470"/>
<ellipse cx="37.500" cy="12.500" rx="2.600" ry="1.300" fill="#b08a64"/>
<path d="M23 23Q30 20 37.500 15.500Q45 17 49.500 12" fill="none" stroke="#7a5a44" stroke-width="1.100"/>
<ellipse cx="27.500" cy="31" rx="4.200" ry="2.400" fill="#d8a884"/>
<ellipse cx="46.500" cy="24" rx="4.200" ry="2.400" fill="#d8a884"/>
<path d="M23.500 23L25 30M23.500 23L30 30M49.500 12L44 23M49.500 12L50 23" stroke="#cdb8a6" stroke-width="0.500" fill="none"/>
<!-- brown book with purple pages -->
<path d="M52 45L66 31L88 42L74 53Z" fill="#b65a34"/>
<path d="M58 40L68 33.500" stroke="#e69a5c" stroke-width="2"/>
<circle cx="76" cy="38" r="3.200" fill="#c98a68"/><circle cx="68" cy="43" r="3" fill="#c98a68"/>
<path d="M52 45L74 53V56L52 48Z" fill="#f4dfe2"/>
<path d="M52 48L74 56V58L52 50Z" fill="#5a3f8a"/>
<path d="M52 50L74 58V61.500L52 53Z" fill="#e6def4"/>
<path d="M52 53L74 61.500V63.500L52 55Z" fill="#6a5aa8"/>
<path d="M74 53L88 42V45L74 56Z" fill="#e9c9cc"/>
<path d="M74 56L88 45V47L74 58Z" fill="#6a4a90"/>
<path d="M74 58L88 47V50.500L74 61.500Z" fill="#d9d0ee"/>
<path d="M74 61.500L88 50.500V52.500L74 63.500Z" fill="#7a6ab8"/>
<!-- gavel -->
<ellipse cx="74" cy="74.500" rx="7.800" ry="4.600" fill="#8a4f2c"/>
<ellipse cx="74" cy="73" rx="7.400" ry="4.200" fill="#b4703e"/>
<path d="M69.500 70L75.500 61L81.500 64.500L75.500 73.500Z" fill="#96592e"/>
<ellipse cx="78.500" cy="62.500" rx="3.500" ry="2.600" fill="#7e4824"/>
<path d="M80 70.500L91 80.500" stroke="#6e4526" stroke-width="2.400" stroke-linecap="round"/>
<!-- stamp -->
<ellipse cx="15" cy="63" rx="5" ry="2.800" fill="#a8623a"/>
<rect x="13" y="55.500" width="4" height="7" fill="#b4703e"/>
<circle cx="15" cy="54.500" r="2.300" fill="#c98a5c"/>
</g>
</svg>
<!-- IMG5: gavel on maroon -->
<svg style="left:793px;top:816px;width:100px;height:100px;overflow:hidden" viewBox="0 0 100 100">
<defs>
<linearGradient id="i5bg" x1="0" y1="0" x2="0" y2="1"><stop offset="0" stop-color="#42251f"/><stop offset="0.300" stop-color="#65362b"/><stop offset="0.660" stop-color="#8f5640"/><stop offset="0.670" stop-color="#5a3f3e"/></linearGradient>
<linearGradient id="i5h" x1="0" y1="0" x2="1" y2="0"><stop offset="0" stop-color="#9a5c2c"/><stop offset="0.220" stop-color="#4a2012"/><stop offset="0.550" stop-color="#5e2c18"/><stop offset="0.850" stop-color="#8e4e24"/><stop offset="1" stop-color="#5a2c14"/></linearGradient>
<linearGradient id="i5s" x1="0" y1="0" x2="0.300" y2="1"><stop offset="0" stop-color="#a4662e"/><stop offset="0.550" stop-color="#8a4e20"/><stop offset="1" stop-color="#4a260e"/></linearGradient>
<filter id="b5" x="-20%" y="-20%" width="140%" height="140%"><feGaussianBlur stdDeviation="0.600"/></filter>
</defs>
<rect width="100" height="100" fill="url(#i5bg)"/>
<g filter="url(#b5)">
<rect x="0" y="67" width="97" height="13" fill="#efeaee"/>
<rect x="0" y="80" width="100" height="2" fill="#3a2430"/>
<rect x="0" y="82" width="99" height="10.500" fill="#d6ccd2"/>
<rect x="0" y="92.500" width="100" height="2" fill="#2a1a20"/>
<rect x="0" y="94.500" width="100" height="5.500" fill="#6a5258"/>
<rect x="97" y="62" width="3" height="38" fill="#7a4a50"/>
<!-- scales -->
<path d="M70.500 0V20" stroke="#c9b08a" stroke-width="2.600"/>
<path d="M87.600 22L80.500 48M87.600 22L95.500 48M87.600 22V48" stroke="#c9a060" stroke-width="1.400" fill="none"/>
<circle cx="87.600" cy="22.500" r="1.700" fill="#8a5a38"/>
<ellipse cx="88" cy="49.500" rx="9" ry="2" fill="#d8b474"/>
<!-- handle -->
<path d="M0 81L40 59L55 52L58 58.500L45 66L0 92Z" fill="url(#i5s)"/>
<ellipse cx="41.800" cy="63.800" rx="3.200" ry="5" fill="#5a3016" transform="rotate(-28 41.800 63.800)"/>
<path d="M0 90L44 65" stroke="#3a1c0a" stroke-width="1.600" opacity="0.700"/>
<!-- base -->
<ellipse cx="63" cy="94.500" rx="28" ry="6.500" fill="#2c140e"/>
<ellipse cx="63" cy="92" rx="27" ry="4" fill="#6a3a22"/>
<ellipse cx="60" cy="91.500" rx="17" ry="2" fill="#3a1a10"/>
<!-- head -->
<path d="M48.500 25Q49 19 57 19.500L66 19.500Q71.500 20 73 26L75.500 44.500L77.500 53Q81 64 81 76Q80.500 86 73 87.500L66 88.500Q59.500 88 57.500 80L54.500 60L52 53L50 44.500Z" fill="url(#i5h)"/>
<path d="M50 44.500L75.500 41L77.500 52L52 56.500Z" fill="#4a2216"/>
<path d="M51 48L76.500 44.500" stroke="#9a6a40" stroke-width="1"/>
<path d="M51.500 27L53 42" stroke="#d8c8e8" stroke-width="1.800" opacity="0.750"/>
<path d="M67.500 23L72 40" stroke="#b87a42" stroke-width="2.200" opacity="0.850"/>
<path d="M76 60Q78.500 70 78 82" stroke="#a86a34" stroke-width="2" opacity="0.700" fill="none"/>
<path d="M48.800 25L48.500 44" stroke="#c9a060" stroke-width="1" opacity="0.800"/>
</g>
</svg>
</body>
</html>
